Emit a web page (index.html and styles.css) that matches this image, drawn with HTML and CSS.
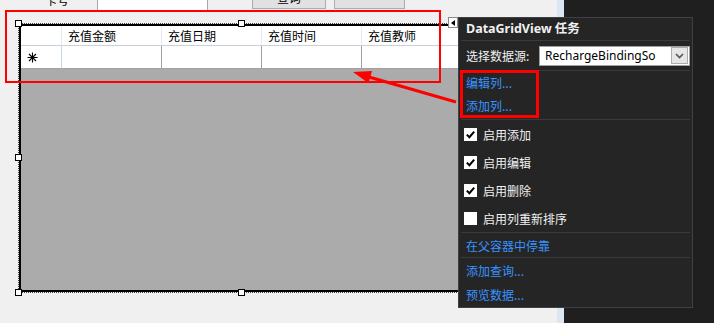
FILE: index.html
```html
<!DOCTYPE html>
<html lang="zh">
<head>
<meta charset="utf-8">
<title>DataGridView 任务</title>
<link rel="stylesheet" href="styles.css">
</head>
<body>
<div class="screen">
  <div class="form">
    <div class="toolbar">
      <span class="lbl">卡号</span>
      <div class="textbox"></div>
      <div class="btn">查询</div>
      <div class="btn btn2">button2</div>
    </div>
    <div class="frame">
      <div class="grid">
        <div class="hcell corner"></div>
        <div class="hcell">充值金额</div>
        <div class="hcell">充值日期</div>
        <div class="hcell">充值时间</div>
        <div class="hcell">充值教师</div>
        <div class="rcell rowhead">
          <svg class="star" width="11" height="11" viewBox="0 0 11 11"><path d="M5.5 0.5V10.5M0.5 5.5H10.5M2 2L9 9M9 2L2 9" stroke="#000" stroke-width="1.1" fill="none"/></svg>
        </div>
        <div class="rcell"></div>
        <div class="rcell"></div>
        <div class="rcell"></div>
        <div class="rcell"></div>
        <div class="gridbg"></div>
      </div>
      <span class="handle h-tl"></span>
      <span class="handle h-tm"></span>
      <span class="handle h-ml"></span>
      <span class="handle h-bl"></span>
      <span class="handle h-bm"></span>
    </div>
  </div>
  <div class="strip"></div>
  <div class="dark"></div>

  <div class="smarttag"><span class="tri"></span></div>

  <div class="panel">
    <div class="ptitle">DataGridView 任务</div>
    <div class="sep"></div>
    <div class="prow dsrow">
      <span class="ptext">选择数据源:</span>
      <div class="combo">
        <span class="combotext">RechargeBindingSo</span>
        <span class="combobtn"><svg width="9" height="6" viewBox="0 0 9 6"><path d="M1 1L4.5 4.5L8 1" stroke="#555" stroke-width="1.6" fill="none"/></svg></span>
      </div>
    </div>
    <div class="sep"></div>
    <div class="section links2">
      <div class="prow link">编辑列...</div>
      <div class="prow link">添加列...</div>
    </div>
    <div class="sep"></div>
    <div class="section checks">
      <div class="prow chk"><span class="box on"><svg width="11" height="11" viewBox="0 0 11 11"><path d="M1.8 5.6L4.4 8.2L9.2 2.6" stroke="#000" stroke-width="2" fill="none"/></svg></span><span class="ptext">启用添加</span></div>
      <div class="prow chk"><span class="box on"><svg width="11" height="11" viewBox="0 0 11 11"><path d="M1.8 5.6L4.4 8.2L9.2 2.6" stroke="#000" stroke-width="2" fill="none"/></svg></span><span class="ptext">启用编辑</span></div>
      <div class="prow chk"><span class="box on"><svg width="11" height="11" viewBox="0 0 11 11"><path d="M1.8 5.6L4.4 8.2L9.2 2.6" stroke="#000" stroke-width="2" fill="none"/></svg></span><span class="ptext">启用删除</span></div>
      <div class="prow chk"><span class="box"></span><span class="ptext">启用列重新排序</span></div>
    </div>
    <div class="sep"></div>
    <div class="section dock">
      <div class="prow link">在父容器中停靠</div>
    </div>
    <div class="sep"></div>
    <div class="section last">
      <div class="prow link">添加查询...</div>
      <div class="prow link">预览数据...</div>
    </div>
  </div>

  <svg class="annot" width="714" height="323" viewBox="0 0 714 323">
    <rect x="6" y="11" width="434" height="71" fill="none" stroke="#ff0000" stroke-width="2"/>
    <rect x="461.5" y="71.5" width="76" height="45" fill="none" stroke="#ff0000" stroke-width="3"/>
    <line x1="456" y1="102" x2="369" y2="77" stroke="#ff0000" stroke-width="3"/>
    <polygon points="353,72 368.5,83.2 372,71" fill="#ff0000"/>
  </svg>
</div>
</body>
</html>
```

FILE: styles.css
```css
html, body {
  margin: 0;
  padding: 0;
}
body {
  width: 714px;
  height: 323px;
  overflow: hidden;
  font-family: "Noto Sans", "Noto Sans CJK SC", sans-serif;
  font-size: 12px;
}
.screen {
  position: relative;
  width: 714px;
  height: 323px;
  overflow: hidden;
  display: flex;
}
.form {
  width: 557px;
  height: 323px;
  background: #f0f0f0;
  flex: none;
}
.strip {
  width: 7px;
  height: 323px;
  background: #dbe6f4;
  flex: none;
}
.dark {
  flex: 1;
  height: 323px;
  background: #1f1f1f;
}

/* top cut-off controls */
.toolbar {
  display: flex;
  align-items: flex-end;
  height: 11px;
}
.lbl {
  margin-left: 45px;
  width: 52px;
  line-height: 12px;
  margin-bottom: 5px;
  font-family: "Noto Sans CJK SC", sans-serif;
  color: #000;
}
.textbox {
  width: 109px;
  height: 24px;
  background: #fff;
  border: 1px solid #a8a8a8;
  border-top: none;
  flex: none;
}
.btn {
  margin-left: 44px;
  margin-bottom: 2px;
  width: 72px;
  height: 22px;
  background: #e1e1e1;
  border: 1px solid #adadad;
  display: flex;
  align-items: center;
  justify-content: center;
  font-family: "Noto Sans CJK SC", sans-serif;
  color: #000;
  flex: none;
}
.btn2 {
  margin-left: 8px;
  width: 69px;
  font-family: "Liberation Mono", monospace;
}

/* designer selection frame */
.frame {
  position: relative;
  margin-top: 12px;
  margin-left: 18px;
  width: 445px;
  height: 268px;
  border: 1px dotted #444;
}
.handle {
  position: absolute;
  width: 5px;
  height: 5px;
  background: #fff;
  border: 1px solid #000;
}
.h-tl { left: -4px; top: -4px; }
.h-tm { left: 219px; top: -4px; }
.h-ml { left: -4px; top: 130px; }
.h-bl { left: -4px; top: 265px; }
.h-bm { left: 219px; top: 265px; }

.grid {
  box-sizing: border-box;
  width: 445px;
  height: 268px;
  border: 2px solid #000;
  border-right: none;
  background: #ababab;
  display: grid;
  grid-template-columns: 41px 100px 100px 100px 1fr;
  grid-template-rows: 20px 23px 1fr;
  font-family: "Noto Sans CJK SC", sans-serif;
  color: #000;
}
.hcell {
  background: #fff;
  border-right: 1px solid #e4e8f0;
  border-bottom: 1px solid #c9d0dc;
  padding-left: 6px;
  display: flex;
  align-items: center;
  line-height: 19px;
}
.corner {
  padding-left: 0;
}
.rcell {
  background: #fff;
  border-right: 1px solid #a0a0a0;
  border-bottom: 1px solid #a0a0a0;
}
.rowhead {
  border-right: 1px solid #c7d5e8;
  display: flex;
  align-items: center;
  padding-left: 6px;
}
.star {
  display: block;
}
.gridbg {
  grid-column: 1 / -1;
}

/* smart tag glyph */
.smarttag {
  position: absolute;
  left: 448px;
  top: 17px;
  width: 8px;
  height: 9px;
  background: #fff;
  border: 1px solid #8a8a8a;
  display: flex;
  align-items: center;
  justify-content: center;
}
.tri {
  width: 0;
  height: 0;
  border-top: 3.5px solid transparent;
  border-bottom: 3.5px solid transparent;
  border-right: 4px solid #000;
}

/* tasks panel */
.panel {
  position: absolute;
  left: 458px;
  top: 17px;
  width: 233px;
  height: 289px;
  background: #252526;
  border: 1px solid #3f3f46;
  display: flex;
  flex-direction: column;
  color: #f1f1f1;
}
.ptitle {
  height: 22px;
  line-height: 22px;
  padding-left: 7px;
  font-weight: bold;
  font-size: 12.5px;
}
.sep {
  height: 1px;
  margin: 0 2px;
  background: #3a3a3e;
  flex: none;
}
.prow {
  display: flex;
  align-items: center;
  padding-left: 7px;
  font-family: "Noto Sans CJK SC", sans-serif;
}
.dsrow {
  height: 29px;
}
.ptext {
  font-family: "Noto Sans CJK SC", sans-serif;
}
.combo {
  margin-left: auto;
  margin-right: 2px;
  width: 149px;
  height: 18px;
  background: #fff;
  border: 1px solid #a0a0a0;
  display: flex;
  align-items: center;
}
.combotext {
  padding-left: 5px;
  color: #000;
  font-family: "Noto Sans", sans-serif;
  font-size: 12px;
  flex: 1;
}
.combobtn {
  width: 15px;
  height: 15px;
  margin-right: 1px;
  background: #e6e6e6;
  border: 1px solid #acacac;
  display: flex;
  align-items: center;
  justify-content: center;
}
.links2 .prow {
  height: 23px;
}
.links2 {
  height: 48px;
}
.link {
  color: #3794ff;
}
.checks .prow {
  height: 28px;
}
.chk {
  padding-left: 5px;
}
.box {
  width: 13px;
  height: 13px;
  background: #fff;
  margin-right: 6px;
  display: flex;
  align-items: center;
  justify-content: center;
  flex: none;
}
.dock .prow {
  height: 24px;
}
.last .prow {
  height: 24px;
}

.annot {
  position: absolute;
  left: 0;
  top: 0;
  pointer-events: none;
}
```
